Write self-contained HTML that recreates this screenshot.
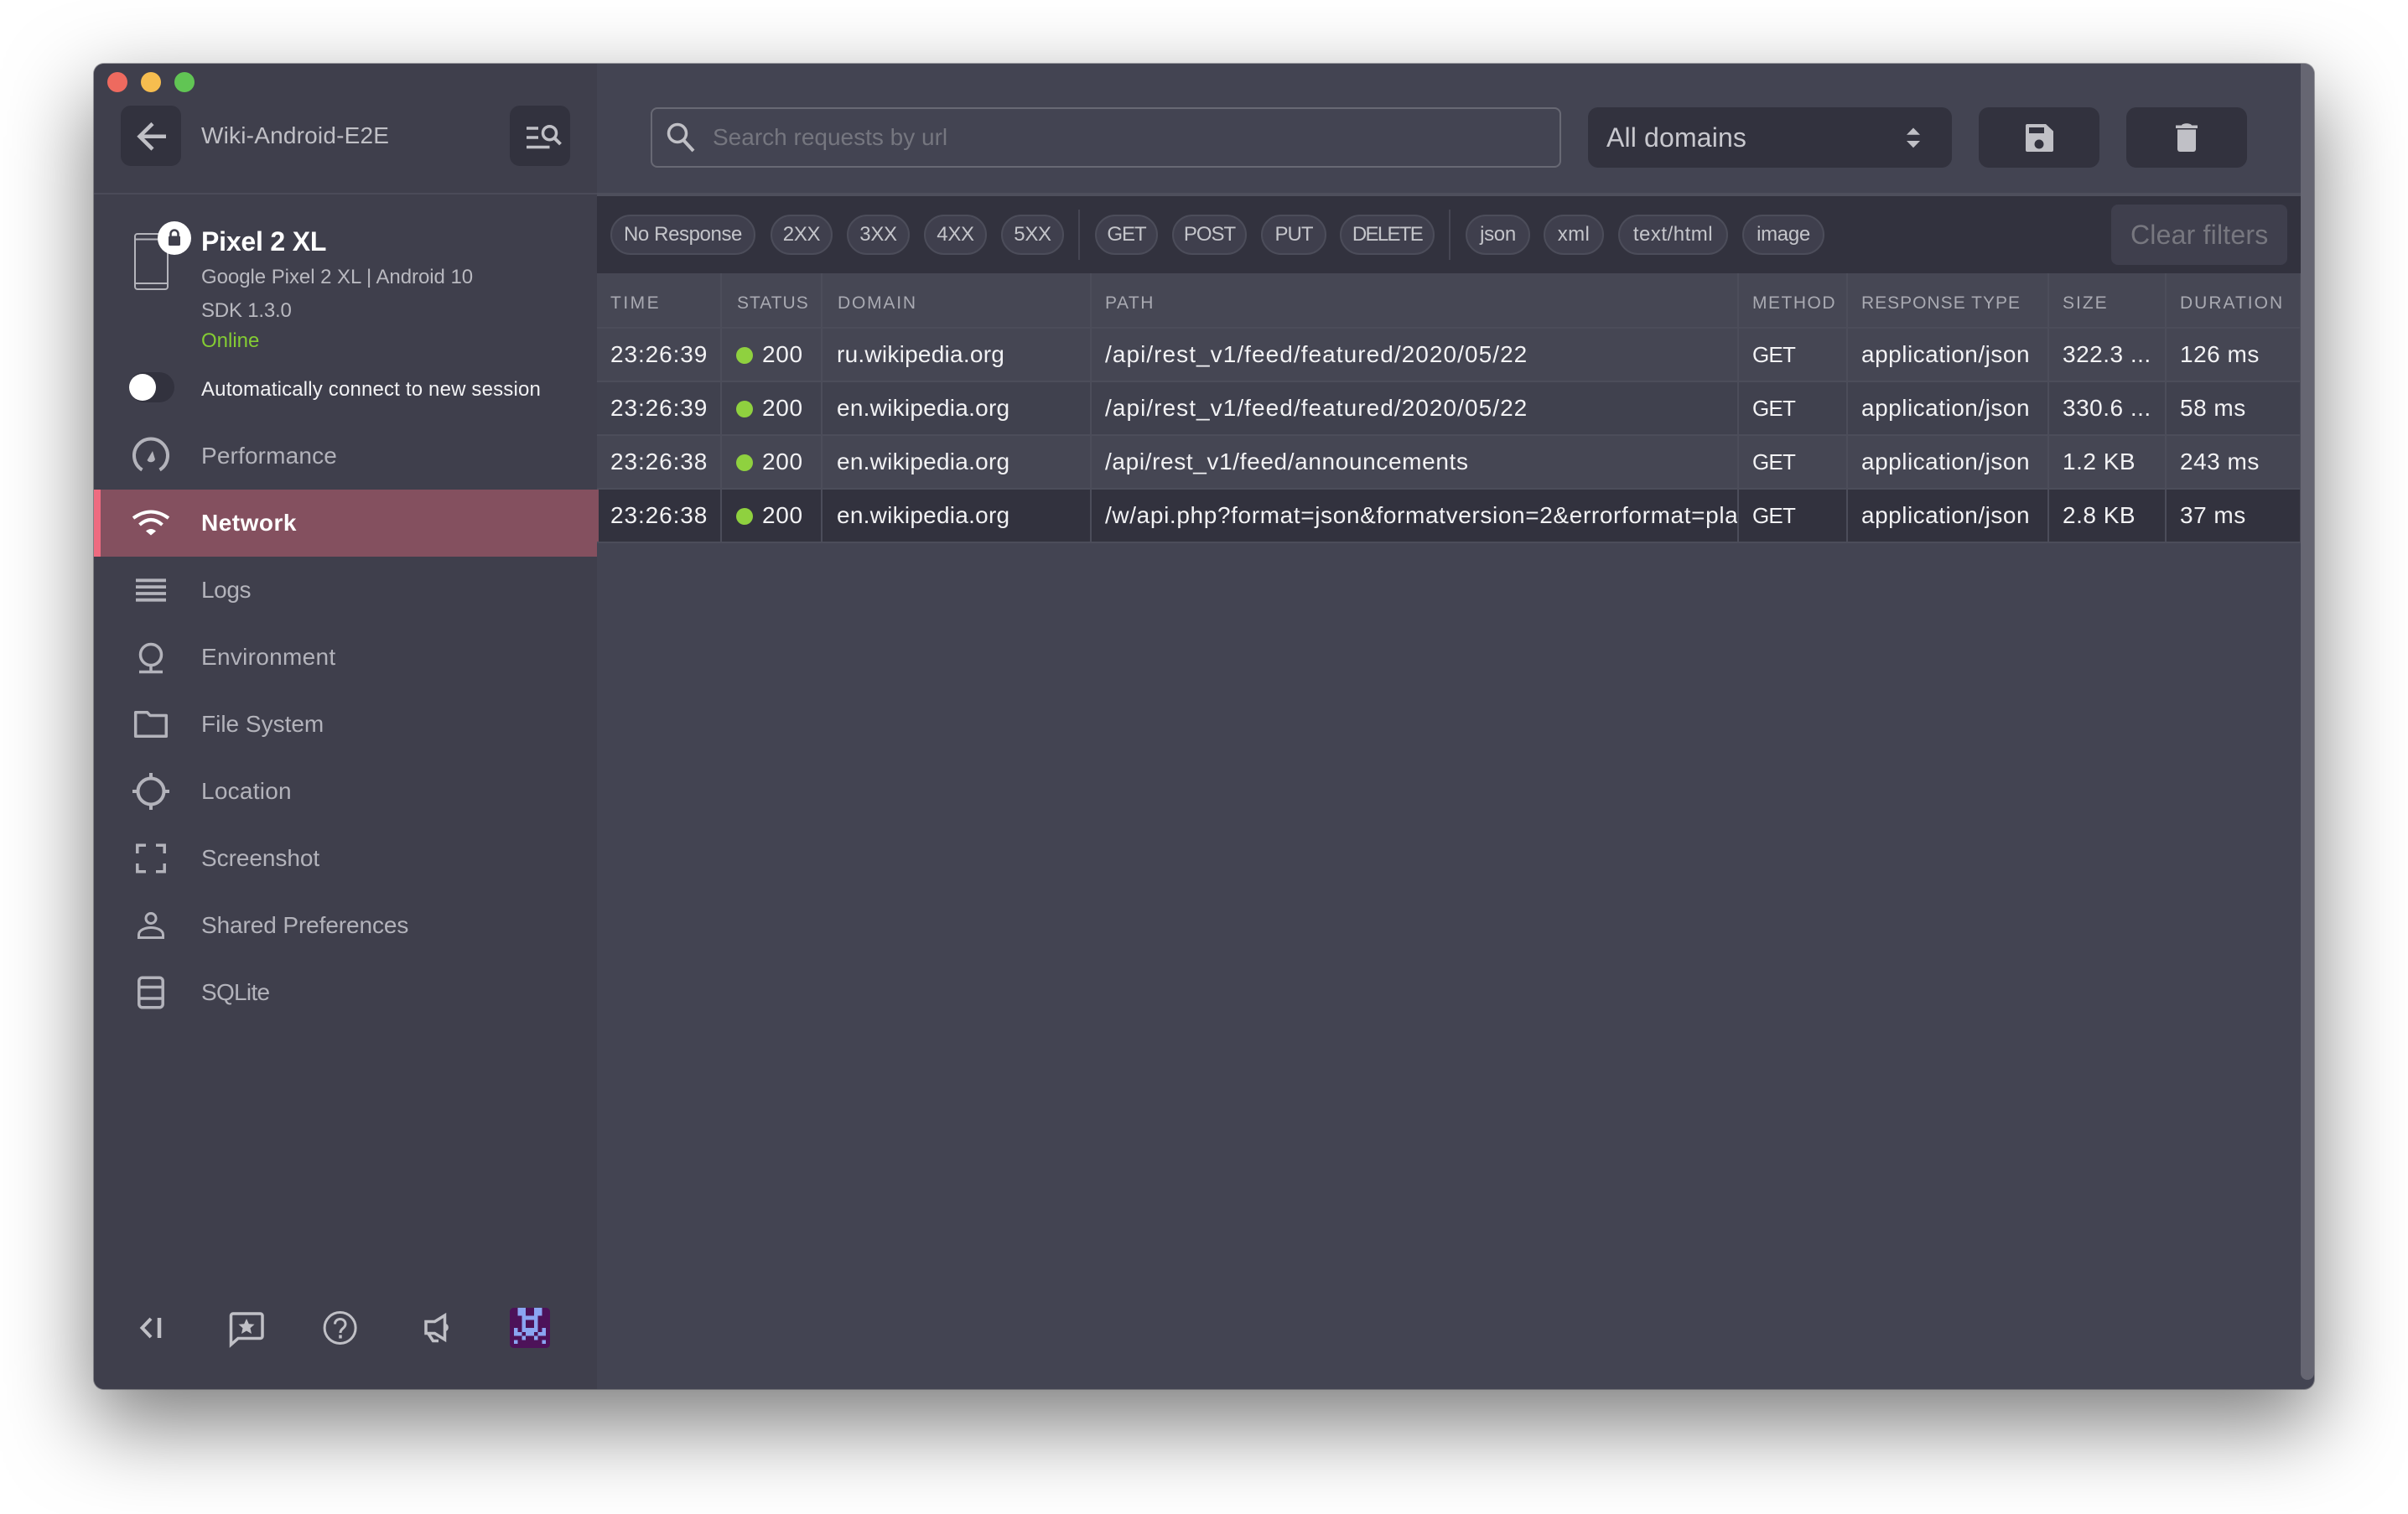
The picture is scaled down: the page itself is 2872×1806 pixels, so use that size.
<!DOCTYPE html>
<html lang="en">
<head>
<meta charset="utf-8">
<title>Wiki-Android-E2E</title>
<style>
*{box-sizing:border-box}
html,body{margin:0;padding:0;width:2872px;height:1806px;background:#fff;overflow:hidden;font-family:"Liberation Sans",sans-serif}
.abs{position:absolute}
#win{position:absolute;left:112px;top:76px;width:2648px;height:1581px;border-radius:12px;background:#434452;box-shadow:0 0 0 1px rgba(60,60,70,.45),0 40px 100px 4px rgba(0,0,0,.5)}
#clip{position:absolute;left:0;top:0;width:2872px;height:1806px}
.side{position:absolute;left:112px;top:76px;width:600px;height:1581px;background:#3f3f4c;border-radius:12px 0 0 12px}
.light{position:absolute;width:24px;height:24px;border-radius:50%;top:86px}
.ibtn{position:absolute;background:#32323e;border-radius:12px}
svg{position:absolute;overflow:visible}
.t{position:absolute;white-space:nowrap;line-height:1}
.nav{position:absolute;left:112px;width:600px;height:80px}
.nav span{position:absolute;left:128px;top:0;line-height:80px;font-size:28px;letter-spacing:.1px;color:#b3b3bb;white-space:nowrap}
.nav svg{left:44px;top:16px}
.nav.on{background:#84505f;border-left:8px solid #ee6b80}
.nav.on span{left:120px;color:#fff;font-weight:bold;letter-spacing:.5px}
.nav.on svg{left:36px}
.chip{position:absolute;top:256px;height:48px;border-radius:24px;background:#3f3f4d;border:2px solid #4c4d5a;color:#c4c5ca;font-size:24px;letter-spacing:-.3px;line-height:44px;text-align:center;white-space:nowrap}
.sep{position:absolute;top:250px;height:60px;width:2px;background:#464653}
table{position:absolute;left:712px;top:326px;width:2032px;border-collapse:collapse;table-layout:fixed}
th,td{padding:0 0 0 16px;border-right:2px solid #4c4d5a;border-bottom:2px solid #4c4d5a;white-space:nowrap;overflow:hidden;text-align:left}
th{height:65px;padding-top:7px;font-size:21px;font-weight:normal;letter-spacing:1px;color:#a9aab2;background:#464754}
td{height:64px;font-size:28px;color:#f2f2f4;letter-spacing:.5px}
tr.a td{background:#454653}
tr.b td{background:#40414e}
tr.s td{background:#32323e}
tr.s td:first-child{box-shadow:inset 2px 0 0 #84505f}
td.time{letter-spacing:.9px}
td.path{letter-spacing:1.05px;padding-right:0}
td.dom{letter-spacing:.25px;padding-left:17px}
td.st{padding-left:17px;letter-spacing:.7px}
td.m{font-size:26px;letter-spacing:-.8px}
th.st{padding-left:18px}
th.dom{padding-left:18px}
.dot{display:inline-block;width:20px;height:20px;border-radius:50%;background:#8fd13f;margin-right:11px;vertical-align:-2px}
</style>
</head>
<body>
<div id="clip">
<div id="win"></div>
<div class="side"></div>

<div class="light" style="left:128px;background:#ee6a5f"></div>
<div class="light" style="left:168px;background:#f6bd4f"></div>
<div class="light" style="left:208px;background:#61c554"></div>

<!-- sidebar header -->
<div class="ibtn" style="left:144px;top:126px;width:72px;height:72px"></div>
<svg style="left:144px;top:126px" width="72" height="72" viewBox="0 0 72 72" fill="none" stroke="#c0c0c6" stroke-width="4.5"><path d="M23 36.7H54M38 21.5 22.5 36.7 38 52"/></svg>
<div class="t" style="left:240px;top:148px;font-size:28px;color:#c0c0c6;letter-spacing:.2px">Wiki-Android-E2E</div>
<div class="ibtn" style="left:608px;top:126px;width:72px;height:72px"></div>
<svg style="left:608px;top:126px" width="72" height="72" viewBox="0 0 72 72" fill="none" stroke="#c0c0c6" stroke-width="3.5"><path d="M20 27H34M20 38H34M20 49.5H47.5"/><circle cx="47.5" cy="32.7" r="8"/><path d="M53 38.5 60.5 46" stroke-width="4"/></svg>
<div class="abs" style="left:112px;top:230px;width:600px;height:2px;background:#4b4b59"></div>

<!-- device -->
<svg style="left:156px;top:260px" width="80" height="90" viewBox="0 0 80 90" fill="none">
<rect x="5" y="19" width="39" height="66" rx="3" stroke="#b4b4bb" stroke-width="2"/>
<path d="M5 25.500H44M5 78H44" stroke="#b4b4bb" stroke-width="2"/>
<circle cx="52" cy="24" r="20" fill="#fff"/>
<path d="M47.500 21.500V19a4.500 4.500 0 0 1 9 0V21.500" stroke="#3f3f4c" stroke-width="2.500"/>
<rect x="45" y="21.500" width="14" height="11.500" rx="1.500" fill="#3f3f4c"/>
</svg>
<div class="t" style="left:240px;top:272px;font-size:32px;font-weight:bold;color:#fff;letter-spacing:-.2px">Pixel 2 XL</div>
<div class="t" style="left:240px;top:319px;font-size:24px;color:#b9b9c0;letter-spacing:-.05px">Google Pixel 2 XL | Android 10</div>
<div class="t" style="left:240px;top:359px;font-size:24px;color:#b9b9c0;letter-spacing:-.2px">SDK 1.3.0</div>
<div class="t" style="left:240px;top:395px;font-size:24px;color:#84cc33">Online</div>
<div class="abs" style="left:154px;top:444px;width:54px;height:36px;border-radius:18px;background:#32323e"></div>
<div class="abs" style="left:154px;top:446px;width:32px;height:32px;border-radius:50%;background:#fff"></div>
<div class="t" style="left:240px;top:453px;font-size:24px;color:#f2f2f4;letter-spacing:.17px">Automatically connect to new session</div>

<!-- nav -->
<div class="nav" style="top:504px"><svg width="48" height="48" viewBox="0 0 48 48" fill="none" stroke="#b3b3bb" stroke-width="4"><path d="M13.500 40.500A20 20 0 1 1 34.500 40.500"/><path d="M26 18 29 28A5.500 5.500 0 0 1 19.500 29Z" fill="#b3b3bb" stroke="none"/></svg><span style="letter-spacing:.15px">Performance</span></div>
<div class="nav on" style="top:584px"><svg width="48" height="48" viewBox="0 0 48 48" fill="none" stroke="#fff" stroke-width="4"><path d="M3 18Q24 3 45 18"/><path d="M10.500 26Q24 14 37.500 26"/><path d="M18 33.500Q24 28.500 30 33.500L24 38.500Z" fill="#fff" stroke="none"/></svg><span>Network</span></div>
<div class="nav" style="top:664px"><svg width="48" height="48" viewBox="0 0 48 48" fill="none" stroke="#b3b3bb" stroke-width="3.800"><path d="M6 12.300H42M6 20.100H42M6 28H42M6 35.700H42"/></svg><span style="letter-spacing:-.4px">Logs</span></div>
<div class="nav" style="top:744px"><svg width="48" height="48" viewBox="0 0 48 48" fill="none" stroke="#b3b3bb" stroke-width="3.500"><circle cx="24" cy="21" r="12.500"/><path d="M24 34V41M10 41.500H38"/></svg><span style="letter-spacing:.3px">Environment</span></div>
<div class="nav" style="top:824px"><svg width="48" height="48" viewBox="0 0 48 48" fill="none" stroke="#b3b3bb" stroke-width="3.500" stroke-linejoin="round"><path d="M5.700 9.700H19.500L23 13.500H42.300V38.300H5.700Z"/></svg><span style="letter-spacing:0">File System</span></div>
<div class="nav" style="top:904px"><svg width="48" height="48" viewBox="0 0 48 48" fill="none" stroke="#b3b3bb" stroke-width="4"><circle cx="24" cy="24" r="15.500"/><path d="M24 2V8M24 40V46M2 24H8M40 24H46"/></svg><span style="letter-spacing:.25px">Location</span></div>
<div class="nav" style="top:984px"><svg width="48" height="48" viewBox="0 0 48 48" fill="none" stroke="#b3b3bb" stroke-width="3.500"><path d="M7.800 18V8.200H18M30 8.200H40.200V18M40.200 30V39.800H30M18 39.800H7.800V30"/></svg><span style="letter-spacing:-.05px">Screenshot</span></div>
<div class="nav" style="top:1064px"><svg width="48" height="48" viewBox="0 0 48 48" fill="none" stroke="#b3b3bb" stroke-width="3"><circle cx="24" cy="15.500" r="6"/><path d="M9.500 38.500V35C9.500 29 18 26.500 24 26.500S38.500 29 38.500 35V38.500Z"/></svg><span style="letter-spacing:-.1px">Shared Preferences</span></div>
<div class="nav" style="top:1144px"><svg width="48" height="48" viewBox="0 0 48 48" fill="none" stroke="#b3b3bb" stroke-width="3.500"><rect x="9.800" y="6.200" width="28.400" height="35.600" rx="4"/><path d="M9.800 17.500H38.200M9.800 31H38.200"/></svg><span style="letter-spacing:-.7px">SQLite</span></div>

<!-- sidebar footer -->
<svg style="left:160px;top:1560px" width="40" height="48" viewBox="0 0 40 48" fill="none" stroke="#c0c0c6"><path d="M20 13 9.500 24 20 35" stroke-width="4"/><path d="M30 12V36" stroke-width="4.500"/></svg>
<svg style="left:270px;top:1560px" width="48" height="50" viewBox="0 0 48 50" fill="none"><path d="M5.500 44V9.500a2.500 2.500 0 0 1 2.500-2.500H40.500a2.500 2.500 0 0 1 2.500 2.500V34a2.500 2.500 0 0 1-2.500 2.500H14Z" stroke="#c0c0c6" stroke-width="3.500"/><path d="M24 13l2.800 6.200 6.700.6-5 4.500 1.500 6.700-6-3.500-6 3.500 1.500-6.700-5-4.500 6.700-.6Z" fill="#c0c0c6"/></svg>
<svg style="left:382px;top:1560px" width="48" height="48" viewBox="0 0 48 48" fill="none" stroke="#c0c0c6" stroke-width="3"><circle cx="23.600" cy="24" r="18.500"/><path d="M17.500 19.500c0-8 12.500-8 12.500 0 0 5-6 5-6 10.500" stroke-width="3"/><path d="M24 32.500V36.500" stroke-width="3.500"/></svg>
<svg style="left:498px;top:1560px" width="48" height="48" viewBox="0 0 48 48" fill="none"><path d="M10 16.500H20.500L32.500 9V38L20.500 30.500H10Z" stroke="#c0c0c6" stroke-width="3.500"/><path d="M13 31 18.500 39.500H25" stroke="#c0c0c6" stroke-width="3.500"/><path d="M34 19a5 5 0 0 1 0 9Z" fill="#c0c0c6"/></svg>
<svg style="left:608px;top:1560px" width="48" height="48" viewBox="0 0 10 10" shape-rendering="crispEdges">
<rect width="10" height="10" rx="1" fill="#4d1259" shape-rendering="auto"/>
<path fill="#8aa5f2" d="M2 0h2v2H2zM6 0h2v2H6zM3 2h4v1H3zM3 3h1v2H3zM6 3h1v2H6zM1 5h1v1H1zM3 5h4v1H3zM8 5h1v1H8zM1 6h2v1H1zM4 6h2v1H4zM7 6h2v1H7zM3 7h1v1H3zM6 7h1v1H6zM1 8h1v1H1zM8 8h1v1H8z"/>
</svg>

<!-- toolbar -->
<div class="abs" style="left:776px;top:128px;width:1086px;height:72px;border:2px solid #686974;border-radius:8px"></div>
<svg style="left:790px;top:140px" width="48" height="48" viewBox="0 0 48 48" fill="none" stroke="#c0c0c6" stroke-width="3.500"><circle cx="18" cy="19" r="10.500"/><path d="M25 27 37 40" stroke-width="4"/></svg>
<div class="t" style="left:850px;top:150px;font-size:28px;color:#75767f;letter-spacing:0">Search requests by url</div>
<div class="ibtn" style="left:1894px;top:128px;width:434px;height:72px"></div>
<div class="t" style="left:1916px;top:148px;font-size:32px;color:#c8c8ce;letter-spacing:.15px">All domains</div>
<svg style="left:2270px;top:148px" width="24" height="32" viewBox="0 0 24 32" fill="#c0c0c6"><path d="M12 4.500 20 12.700H4ZM4 20H20L12 28.200Z"/></svg>
<div class="ibtn" style="left:2360px;top:128px;width:144px;height:72px"></div>
<svg style="left:2410px;top:142px" width="44" height="44" viewBox="0 0 44 44"><path fill-rule="evenodd" fill="#c0c0c6" d="M7.500 6H30L39 14.500V37a2 2 0 0 1-2 2H8a2 2 0 0 1-2-2V8a2 2 0 0 1 1.500-2ZM10 10V17H28V10ZM22 24.500a5.500 5.500 0 1 0 .01 0Z"/></svg>
<div class="ibtn" style="left:2536px;top:128px;width:144px;height:72px"></div>
<svg style="left:2586px;top:142px" width="44" height="44" viewBox="0 0 44 44" fill="#c0c0c6"><path d="M9 7.500H16C17 4.500 27 4.500 28 7.500H35V11H9Z"/><path d="M11 12.500H33V36a3 3 0 0 1-3 3H14a3 3 0 0 1-3-3Z"/></svg>

<!-- filter bar -->
<div class="abs" style="left:712px;top:230px;width:2032px;height:4px;background:#4e4f5c"></div>
<div class="abs" style="left:712px;top:234px;width:2032px;height:92px;background:#32323e"></div>
<div class="chip" style="left:728px;width:173px;letter-spacing:-.4px">No Response</div>
<div class="chip" style="left:919px;width:74px">2XX</div>
<div class="chip" style="left:1010px;width:75px">3XX</div>
<div class="chip" style="left:1102px;width:75px">4XX</div>
<div class="chip" style="left:1194px;width:75px">5XX</div>
<div class="sep" style="left:1286px"></div>
<div class="chip" style="left:1306px;width:75px;letter-spacing:-1px">GET</div>
<div class="chip" style="left:1398px;width:89px;letter-spacing:-1px">POST</div>
<div class="chip" style="left:1504px;width:78px;letter-spacing:-1px">PUT</div>
<div class="chip" style="left:1598px;width:113px;letter-spacing:-1.7px">DELETE</div>
<div class="sep" style="left:1728px"></div>
<div class="chip" style="left:1748px;width:77px">json</div>
<div class="chip" style="left:1841px;width:72px;letter-spacing:.4px">xml</div>
<div class="chip" style="left:1930px;width:131px;letter-spacing:.5px">text/html</div>
<div class="chip" style="left:2078px;width:98px">image</div>
<div class="abs" style="left:2518px;top:244px;width:210px;height:72px;background:#3f3f4d;border-radius:8px"></div>
<div class="t" style="left:2541px;top:264px;font-size:32px;color:#77777f;letter-spacing:.2px">Clear filters</div>

<!-- table -->
<table>
<colgroup><col style="width:148px"><col style="width:120px"><col style="width:321px"><col style="width:772px"><col style="width:130px"><col style="width:240px"><col style="width:140px"><col style="width:161px"></colgroup>
<thead><tr><th style="letter-spacing:2.5px">TIME</th><th class="st">STATUS</th><th class="dom" style="letter-spacing:1.8px">DOMAIN</th><th style="letter-spacing:1.5px">PATH</th><th style="letter-spacing:1.5px">METHOD</th><th>RESPONSE TYPE</th><th style="letter-spacing:2px">SIZE</th><th style="letter-spacing:2px">DURATION</th></tr></thead>
<tbody>
<tr class="a"><td class="time">23:26:39</td><td class="st"><i class="dot"></i>200</td><td class="dom">ru.wikipedia.org</td><td class="path">/api/rest_v1/feed/featured/2020/05/22</td><td class="m">GET</td><td>application/json</td><td>322.3 ...</td><td>126 ms</td></tr>
<tr class="b"><td class="time">23:26:39</td><td class="st"><i class="dot"></i>200</td><td class="dom">en.wikipedia.org</td><td class="path">/api/rest_v1/feed/featured/2020/05/22</td><td class="m">GET</td><td>application/json</td><td>330.6 ...</td><td>58 ms</td></tr>
<tr class="a"><td class="time">23:26:38</td><td class="st"><i class="dot"></i>200</td><td class="dom">en.wikipedia.org</td><td class="path" style="letter-spacing:.63px">/api/rest_v1/feed/announcements</td><td class="m">GET</td><td>application/json</td><td>1.2 KB</td><td>243 ms</td></tr>
<tr class="s"><td class="time">23:26:38</td><td class="st"><i class="dot"></i>200</td><td class="dom">en.wikipedia.org</td><td class="path" style="letter-spacing:.63px">/w/api.php?format=json&amp;formatversion=2&amp;errorformat=plaintext&amp;action=query</td><td class="m">GET</td><td>application/json</td><td>2.8 KB</td><td>37 ms</td></tr>
</tbody>
</table>

<!-- scrollbar -->
<div class="abs" style="left:2744px;top:76px;width:16px;height:1570px;background:#666672;border-radius:0 12px 8px 8px"></div>
</div>
</body>
</html>
